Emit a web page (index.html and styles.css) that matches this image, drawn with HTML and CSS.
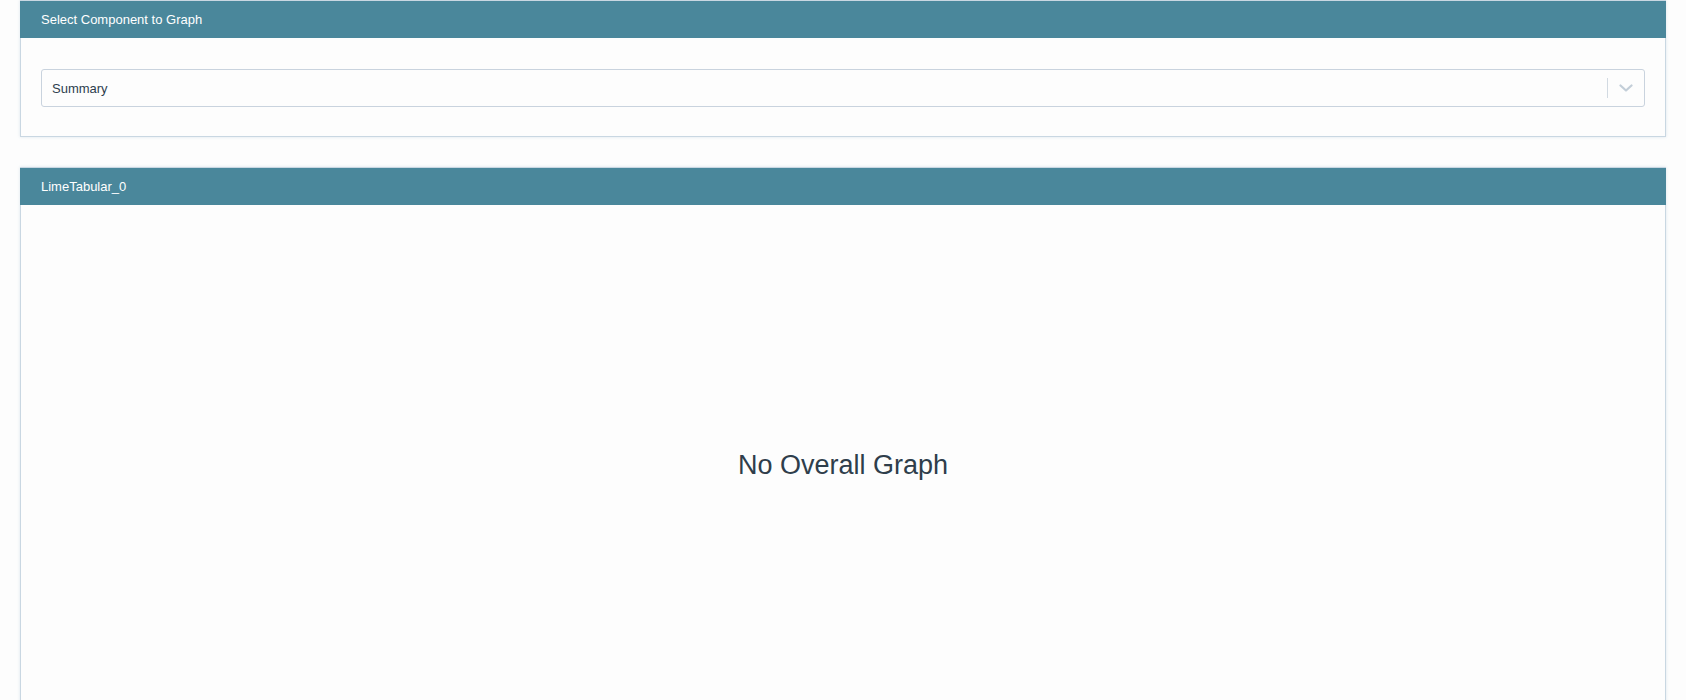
FILE: index.html
```html
<!DOCTYPE html>
<html>
<head>
<meta charset="utf-8">
<link rel="stylesheet" href="styles.css">
</head>
<body>
<div class="page">
  <section class="card">
    <div class="card-header">Select Component to Graph</div>
    <div class="card-body">
      <div class="select">
        <span class="select-value">Summary</span>
        <span class="select-sep"></span>
        <span class="select-arrow">
          <svg width="14" height="9" viewBox="0 0 14 9"><path d="M1.5 1.5 L7 6.5 L12.5 1.5" fill="none" stroke="#c3ced8" stroke-width="2.2" stroke-linecap="round" stroke-linejoin="round"/></svg>
        </span>
      </div>
    </div>
  </section>
  <section class="card card-graph">
    <div class="card-header">LimeTabular_0</div>
    <div class="graph-body">
      <div class="empty">No Overall Graph</div>
    </div>
  </section>
</div>
</body>
</html>
```
FILE: styles.css
```css
html, body {
  margin: 0;
  padding: 0;
  background: #fdfdfd;
  font-family: "Liberation Sans", Arial, sans-serif;
  overflow: hidden;
}
.page {
  padding: 0 20px;
  display: flex;
  flex-direction: column;
  gap: 30px;
}
.card {
  border: 1px solid #c9d7e2;
  background: #fdfdfd;
  box-shadow: 0 0 3px rgba(200, 215, 228, 0.6);
}
.card-header {
  background: #4a879b;
  color: #ffffff;
  font-size: 13px;
  height: 37px;
  line-height: 37px;
  padding: 0 21px;
  margin: 0 -1px;
}
.card-body {
  padding: 31px 20px 29px 20px;
}
.select {
  height: 36px;
  border: 1px solid #c9d3de;
  border-radius: 3px;
  display: flex;
  align-items: center;
  background: #fdfdfd;
}
.select-value {
  flex: 1;
  font-size: 13px;
  color: #2d3e4e;
  padding-left: 10px;
}
.select-sep {
  width: 1px;
  height: 20px;
  background: #d2dae2;
}
.select-arrow {
  width: 36px;
  display: flex;
  justify-content: center;
  align-items: center;
}
.graph-body {
  height: 560px;
  display: flex;
  justify-content: center;
  padding-top: 245px;
  box-sizing: border-box;
}
.empty {
  font-size: 27px;
  color: #2f3e4b;
}
```
